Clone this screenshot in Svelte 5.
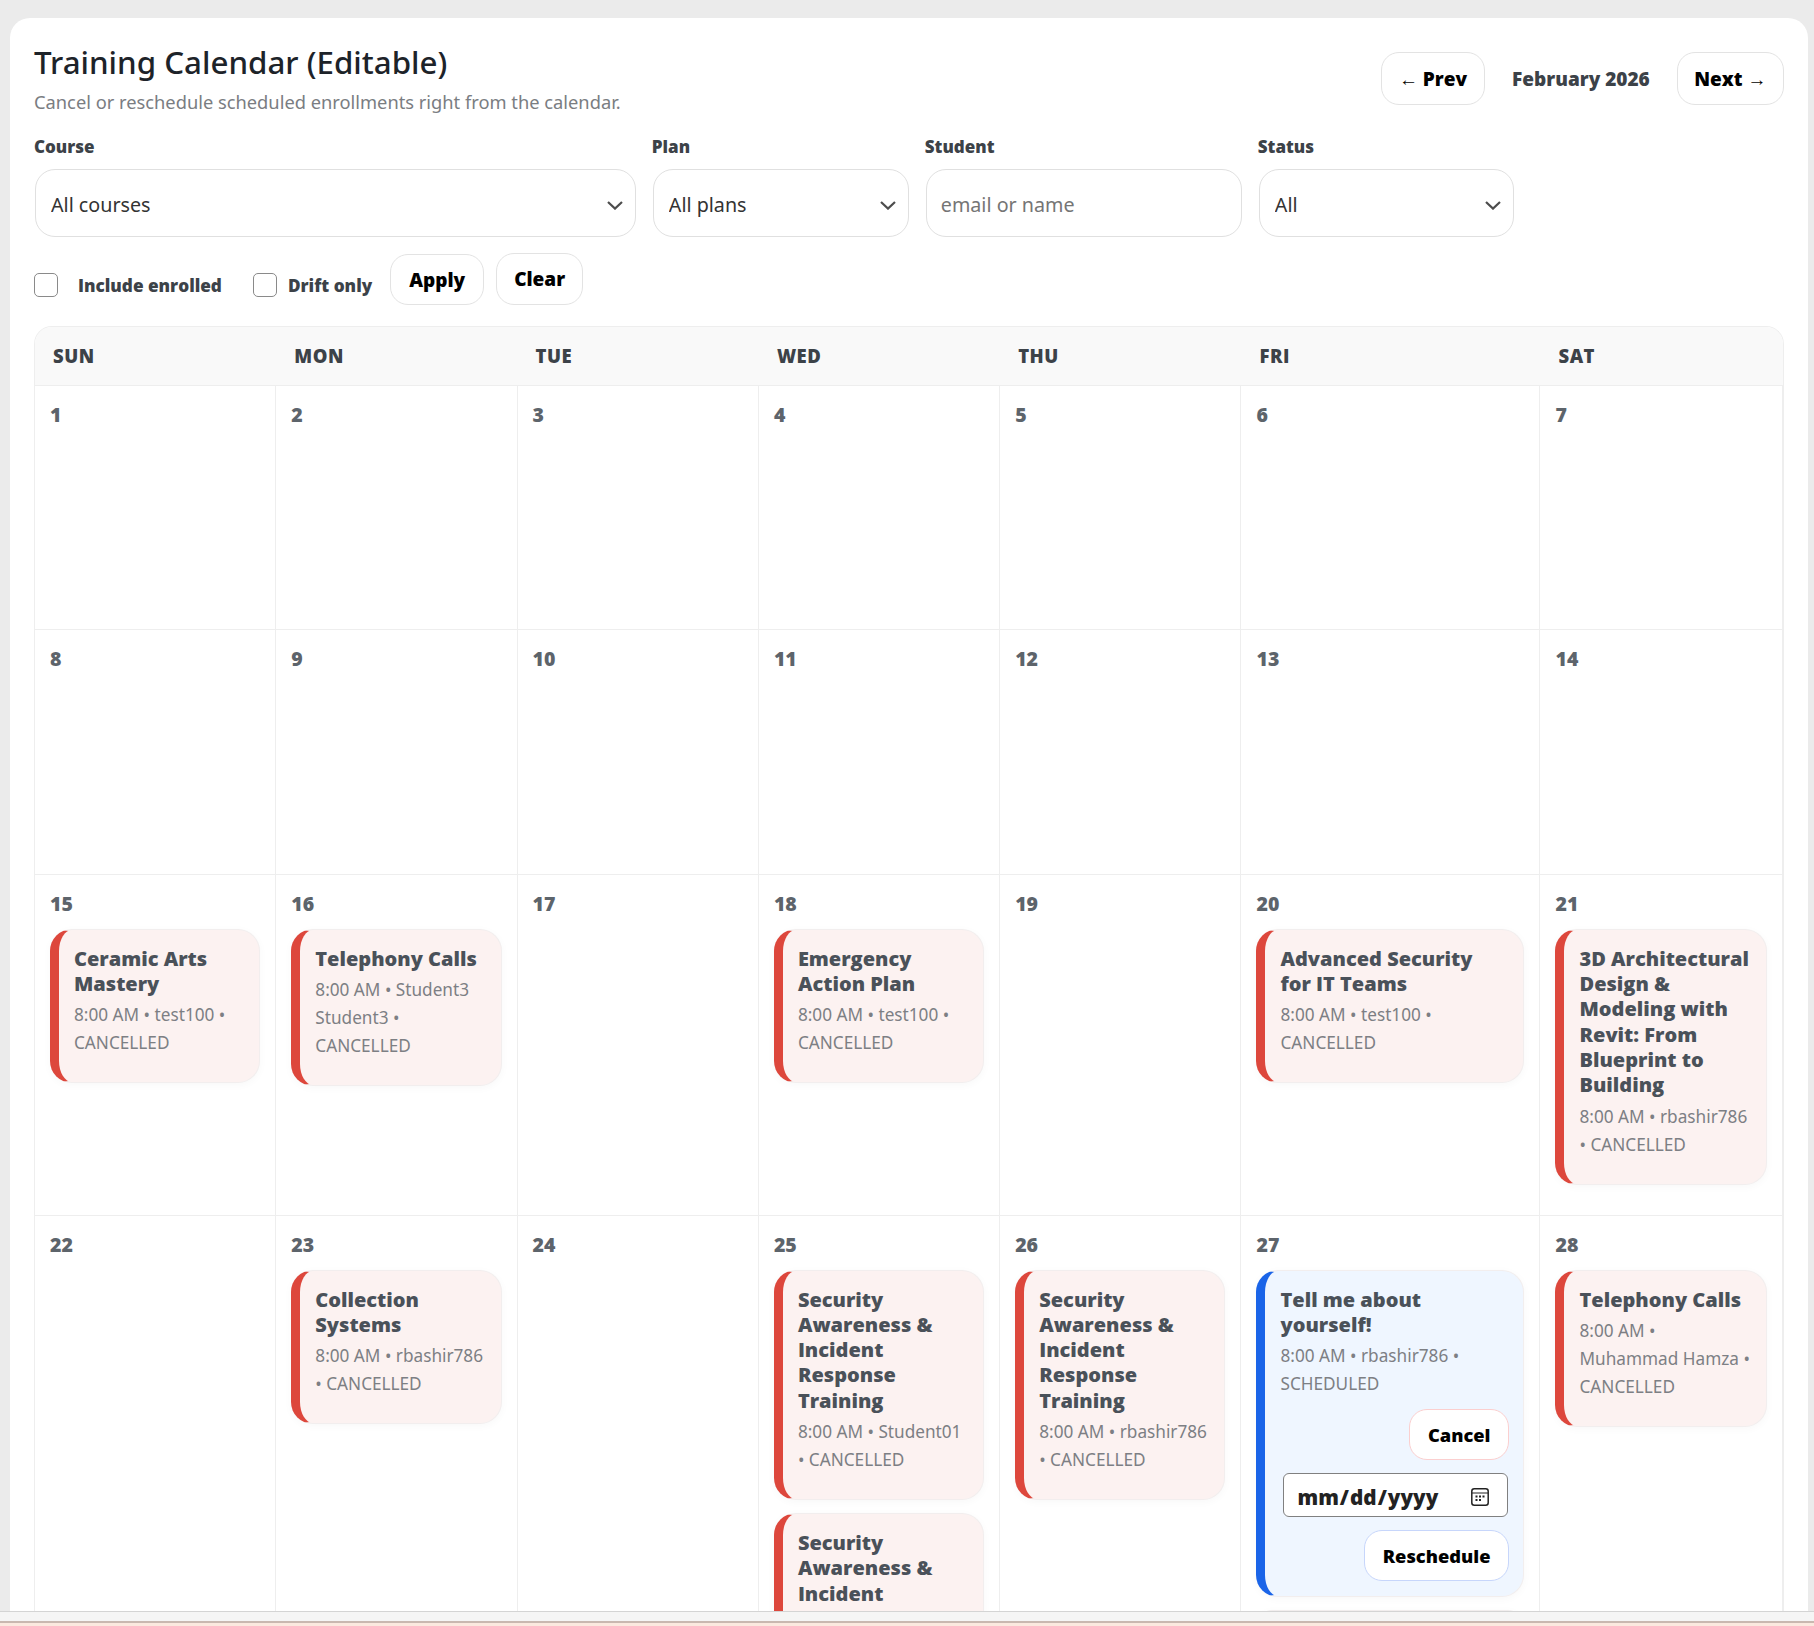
<script>
	const days = ['Sun', 'Mon', 'Tue', 'Wed', 'Thu', 'Fri', 'Sat'];

	const ev = (title, who, status = 'CANCELLED') => ({ title, who, status });
	const security = 'Security Awareness & Incident Response Training';

	const events = {
		15: [ev('Ceramic Arts Mastery', 'test100')],
		16: [ev('Telephony Calls', 'Student3 Student3')],
		18: [ev('Emergency Action Plan', 'test100')],
		20: [ev('Advanced Security for\u00a0IT\u00a0Teams', 'test100')],
		21: [ev('3D Architectural Design & Modeling with Revit: From Blueprint to Building', 'rbashir786')],
		23: [ev('Collection Systems', 'rbashir786')],
		25: [ev(security, 'Student01'), ev(security, 'Student02')],
		26: [ev(security, 'rbashir786')],
		27: [ev('Tell me about yourself!', 'rbashir786', 'SCHEDULED'), ev('', '', 'SCHEDULED')],
		28: [ev('Telephony Calls', 'Muhammad Hamza')]
	};

	const dates = Array.from({ length: 28 }, (_, i) => i + 1);
</script>

<div class="page">
	<div class="viewport">
		<main class="card">
			<header class="top">
				<div>
					<h1>Training Calendar (Editable)</h1>
					<p class="sub">Cancel or reschedule scheduled enrollments right from the calendar.</p>
				</div>
				<nav class="month-nav">
					<button class="btn">← Prev</button>
					<span class="month">February 2026</span>
					<button class="btn next">Next →</button>
				</nav>
			</header>

			<div class="filters">
				<div class="field">
					<label for="course">Course</label>
					<select id="course"><option>All courses</option></select>
				</div>
				<div class="field">
					<label for="plan">Plan</label>
					<select id="plan"><option>All plans</option></select>
				</div>
				<div class="field">
					<label for="student">Student</label>
					<input id="student" type="text" placeholder="email or name" />
				</div>
				<div class="field">
					<label for="status">Status</label>
					<select id="status"><option>All</option></select>
				</div>
			</div>

			<div class="actions">
				<label class="check first"><input type="checkbox" /><span>Include enrolled</span></label>
				<label class="check"><input type="checkbox" /><span>Drift only</span></label>
				<button class="btn apply">Apply</button>
				<button class="btn clear">Clear</button>
			</div>

			<section class="calendar">
				{#each days as day}
					<div class="dow">{day}</div>
				{/each}
				{#each dates as date}
					<div class="cell">
						<div class="date">{date}</div>
						{#each events[date] ?? [] as e}
							<article class="event" class:scheduled={e.status === 'SCHEDULED'}>
								{#if e.title}
									<div class="title">{e.title}</div>
									<div class="meta">8:00 AM • {e.who} • {e.status}</div>
									{#if e.status === 'SCHEDULED'}
										<div class="controls">
											<button class="btn small danger">Cancel</button>
											<input class="date-input" type="date" />
											<button class="btn small primary">Reschedule</button>
										</div>
									{/if}
								{/if}
							</article>
						{/each}
					</div>
				{/each}
			</section>
		</main>
	</div>
	<footer class="bar"></footer>
</div>

<style>
	:global(body) {
		margin: 0;
		background: #ebebeb;
	}

	.page {
		height: 1626px;
		display: flex;
		flex-direction: column;
		overflow: hidden;
		font-family: 'Noto Sans', 'Open Sans', sans-serif;
		color: #333;
	}

	.viewport {
		flex: 1;
		min-height: 0;
		overflow: hidden;
		padding: 18px 6px 0 10px;
	}

	.card {
		background: #fff;
		border-radius: 20px 20px 0 0;
		padding: 22px 24px 40px 24px;
	}

	.top {
		display: flex;
		justify-content: space-between;
		align-items: flex-start;
	}

	h1 {
		margin: 0;
		font-size: 31.3px;
		line-height: 44px;
		font-weight: 500;
		color: #1d2329;
	}

	.sub {
		margin: 4px 0 0;
		font-size: 18.3px;
		line-height: 28px;
		color: #7a7d82;
	}

	.month-nav {
		display: flex;
		align-items: center;
		gap: 27px;
		margin-top: 12px;
	}

	.btn {
		font-family: 'Open Sans', 'Liberation Sans', sans-serif;
		font-size: 19px;
		font-weight: 800;
		color: #000;
		background: #fff;
		border: 1px solid #e3e3e3;
		border-radius: 18px;
		height: 53px;
		padding: 0 17px;
	}

	.next {
		padding: 0 16.5px;
	}

	.month {
		font-family: 'Open Sans', sans-serif;
		font-size: 19px;
		font-weight: 800;
		color: #3c4248;
	}

	.filters {
		display: grid;
		grid-template-columns: 601.8px 257px 317px 256.4px;
		column-gap: 16px;
		margin-top: 20px;
	}

	.field {
		display: flex;
		flex-direction: column;
	}

	.field label {
		font-family: 'Open Sans', sans-serif;
		font-size: 17px;
		line-height: 22px;
		font-weight: 800;
		color: #3c4248;
		margin-bottom: 11px;
	}

	.field select,
	.field input {
		box-sizing: border-box;
		height: 68px;
		margin-left: 1px;
		padding: 2px 14px 0;
		font-family: 'Noto Sans', sans-serif;
		font-size: 19.7px;
		color: #333;
		background: #fff;
		border: 1px solid #e0e0e0;
		border-radius: 20px;
	}

	.field select {
		appearance: none;
		padding-left: 15px;
		background-image: url("data:image/svg+xml,%3Csvg xmlns='http://www.w3.org/2000/svg' width='16' height='9' viewBox='0 0 16 9'%3E%3Cpath d='M1 1l7 6.6L15 1' fill='none' stroke='%234d4d4d' stroke-width='2.2'/%3E%3C/svg%3E");
		background-repeat: no-repeat;
		background-position: right 12px top 31px;
	}

	.actions {
		display: flex;
		align-items: flex-end;
		margin-top: 16px;
	}

	.check {
		display: flex;
		align-items: center;
		font-family: 'Open Sans', sans-serif;
		font-size: 17.2px;
		font-weight: 800;
		color: #3c4248;
		margin-right: 18px;
		height: 40px;
	}

	.check input {
		appearance: none;
		box-sizing: border-box;
		width: 24px;
		height: 24px;
		margin: 0 11px 0 0;
		background: #fff;
		border: 1.5px solid #8a8a8a;
		border-radius: 5px;
	}

	.check.first {
		margin-right: 31px;
	}

	.check.first input {
		margin-right: 20px;
	}

	.apply {
		height: 51px;
		margin-right: 12px;
		padding: 0 18px;
	}

	.clear {
		height: 52px;
		padding: 0 17px;
	}

	.calendar {
		display: grid;
		grid-template-columns: repeat(5, 241.3px) 299px 1fr;
		margin-top: 21px;
		border: 1px solid #eeeeee;
		border-bottom: 0;
		border-radius: 18px 18px 0 0;
		overflow: hidden;
		width: 1750px;
		box-sizing: border-box;
	}

	.dow {
		box-sizing: border-box;
		height: 59px;
		display: flex;
		align-items: center;
		padding: 0 0 2px 18px;
		background: #f9f9f9;
		border-bottom: 1px solid #eeeeee;
		font-family: 'Open Sans', sans-serif;
		font-size: 18.5px;
		font-weight: 800;
		letter-spacing: 0.5px;
		text-transform: uppercase;
		color: #3c4248;
	}

	.cell {
		box-sizing: border-box;
		min-height: 244.4px;
		padding: 17px 15px 17px;
		border-right: 1px solid #eeeeee;
		border-bottom: 1px solid #eeeeee;
		min-width: 0;
	}

	.date {
		font-family: 'Open Sans', sans-serif;
		font-size: 19.5px;
		line-height: 24px;
		font-weight: 800;
		color: #5d646b;
		margin-bottom: 13px;
	}

	.event {
		box-sizing: border-box;
		background: #fcf2f1;
		border: 1px solid #f2eeee;
		border-left: 9px solid #dd473c;
		border-radius: 22px;
		padding: 16px 14px 25px 15px;
		box-shadow: 0 2px 8px rgba(0, 0, 0, 0.03);
		margin-bottom: 13px;
	}

	.event.scheduled {
		background: #eff6ff;
		border-left-color: #1a64e8;
		padding-bottom: 15px;
	}

	.title {
		font-family: 'Open Sans', sans-serif;
		font-size: 20px;
		line-height: 25.3px;
		font-weight: 800;
		color: #4a5159;
	}

	.meta {
		margin-top: 5px;
		font-size: 17.2px;
		line-height: 28px;
		color: #7d7f84;
	}

	.controls {
		display: flex;
		flex-direction: column;
		align-items: flex-end;
		margin-top: 11px;
		gap: 13px;
	}

	.small {
		height: 51px;
		padding: 0 18px;
		font-size: 18.3px;
	}

	.danger {
		border-color: #fbcfcf;
	}

	.primary {
		border-color: #c7d6fb;
	}

	.date-input {
		box-sizing: border-box;
		width: 225px;
		height: 44px;
		margin-right: 1px;
		padding: 4px 12px 0;
		font-family: 'Open Sans', sans-serif;
		font-size: 20.7px;
		font-weight: 800;
		color: #222;
		background: #fff;
		border: 1px solid #808080;
		border-radius: 6px;
	}

	.date-input::-webkit-calendar-picker-indicator {
		width: 18px;
		height: 18px;
		padding: 0;
		margin: 0 6px 0 0;
		background-image: url("data:image/svg+xml,%3Csvg xmlns='http://www.w3.org/2000/svg' width='18' height='18' viewBox='0 0 18 18'%3E%3Crect x='.8' y='.8' width='16.4' height='16.4' rx='2.5' fill='none' stroke='%23222' stroke-width='1.5'/%3E%3Cpath d='M1 5h16' stroke='%23222' stroke-width='1.2'/%3E%3Cg fill='%23222'%3E%3Crect x='4.5' y='7.5' width='2' height='2'/%3E%3Crect x='8' y='7.5' width='2' height='2'/%3E%3Crect x='11.5' y='7.5' width='2' height='2'/%3E%3Crect x='4.5' y='11' width='2' height='2'/%3E%3Crect x='8' y='11' width='2' height='2'/%3E%3C/g%3E%3C/svg%3E");
		background-repeat: no-repeat;
		background-size: 18px 18px;
	}

	.bar {
		flex: none;
		box-sizing: border-box;
		height: 15px;
		background: #f5f5f5;
		border-top: 1px solid #d4d4d4;
		position: relative;
		z-index: 1;
	}

	.bar::after {
		content: '';
		display: block;
		margin-top: 9px;
		height: 5px;
		background: #fbe9df;
		border-top: 2px solid #c9b8b0;
		box-sizing: border-box;
	}
</style>
